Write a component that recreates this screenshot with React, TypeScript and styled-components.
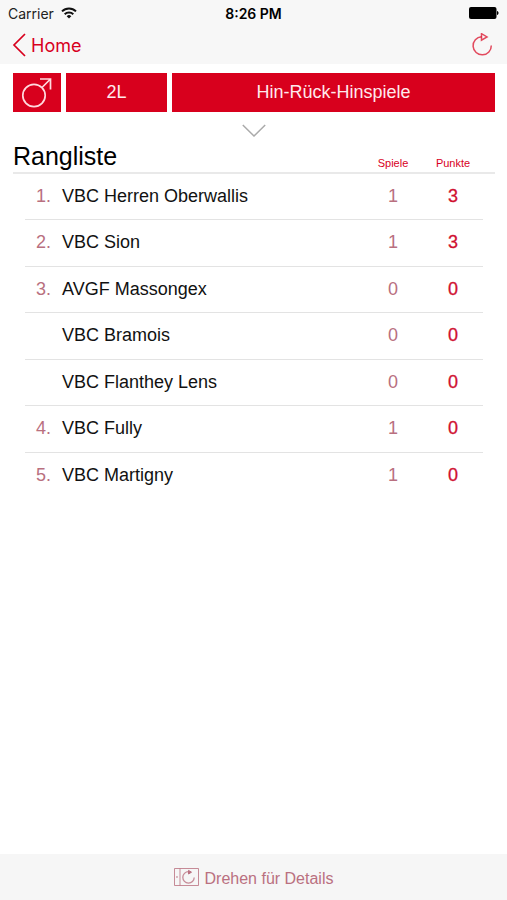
import React from "react";
import styled, { createGlobalStyle } from "styled-components";

const red = "#d8001d";
const muted = "#b9707f";
const bar = "#f7f7f7";
const line = "#e3e3e3";

const GlobalStyle = createGlobalStyle`
  *, *::before, *::after { box-sizing: border-box; }
  body {
    margin: 0;
    background: #fff;
    color: #111;
    font-family: "Liberation Sans", Arial, sans-serif;
  }
  button { font: inherit; border: 0; padding: 0; background: none; cursor: pointer; }
  svg { display: block; }
`;

const Screen = styled.div`
  min-height: 100vh;
  display: flex;
  flex-direction: column;
`;

const TopBar = styled.header`
  background: ${bar};
  font-family: Inter, sans-serif;
`;

const StatusBar = styled.div`
  height: 26px;
  padding: 0 8px;
  display: grid;
  grid-template-columns: 1fr auto 1fr;
  align-items: center;
  font-size: 14px;
  color: #222;
`;

const Carrier = styled.div`
  display: flex;
  align-items: center;
  gap: 7px;
`;

const Clock = styled.time`
  font-weight: 600;
  color: #000;
`;

const Battery = styled.div`
  justify-self: end;
`;

const NavBar = styled.nav`
  height: 38px;
  padding: 0 14px 0 12px;
  display: flex;
  align-items: center;
  justify-content: space-between;
`;

const BackLink = styled.a`
  display: flex;
  align-items: center;
  gap: 5px;
  color: ${red};
  font-size: 18px;
  text-decoration: none;
`;

const IconButton = styled.button`
  color: ${red};
`;

const Content = styled.main`
  flex: 1;
  padding: 9px 12px 0 13px;
`;

const Filters = styled.div`
  display: grid;
  grid-template-columns: 48px 101px 1fr;
  gap: 5px;
`;

const FilterButton = styled.button`
  height: 39px;
  display: flex;
  align-items: center;
  justify-content: center;
  background: ${red};
  color: #ffe9ec;
  font-size: 18px;
`;

const ExpandButton = styled.button`
  display: block;
  margin: 12px auto 0;
`;

const Table = styled.table`
  display: block;
  margin-top: 3px;
`;

const TableHead = styled.thead`
  display: block;
  border-bottom: 2px solid #e9e9e9;
`;

const HeadRow = styled.tr`
  height: 32px;
  padding-right: 12px;
  display: grid;
  grid-template-columns: 1fr 60px 60px;
  align-items: end;
`;

const Title = styled.th`
  padding: 0 0 1px;
  font-size: 25px;
  line-height: 30px;
  font-weight: 400;
  text-align: left;
  color: #000;
`;

const ColumnLabel = styled.th`
  padding: 0 0 2px;
  font-size: 11px;
  line-height: 14px;
  font-weight: 400;
  text-align: center;
  color: ${red};
`;

const TableBody = styled.tbody`
  display: block;
  margin: 0 12px;
`;

const TeamRow = styled.tr`
  height: 46px;
  display: grid;
  grid-template-columns: 26px 1fr 60px 60px;
  align-items: center;
  font-size: 18px;
  line-height: 22px;

  &:nth-child(even) { height: 47px; }
  &:not(:last-child) { border-bottom: 1px solid ${line}; }
`;

const Rank = styled.td`
  padding: 0 0 2px;
  text-align: right;
  color: ${muted};
`;

const Team = styled.td`
  padding: 0 0 2px 11px;
`;

const Score = styled.td<{ $strong?: boolean }>`
  padding: 0 0 2px;
  text-align: center;
  color: ${(p) => (p.$strong ? "#d01030" : muted)};
  -webkit-text-stroke: ${(p) => (p.$strong ? "0.3px currentColor" : "0")};
`;

const Footer = styled.footer`
  height: 46px;
  padding-top: 4px;
  display: flex;
  align-items: center;
  justify-content: center;
  gap: 6px;
  background: #f6f6f6;
  color: #ba7080;
  font-size: 16px;
`;

const teams = [
  { rank: "1.", name: "VBC Herren Oberwallis", games: 1, points: 3 },
  { rank: "2.", name: "VBC Sion", games: 1, points: 3 },
  { rank: "3.", name: "AVGF Massongex", games: 0, points: 0 },
  { rank: "", name: "VBC Bramois", games: 0, points: 0 },
  { rank: "", name: "VBC Flanthey Lens", games: 0, points: 0 },
  { rank: "4.", name: "VBC Fully", games: 1, points: 0 },
  { rank: "5.", name: "VBC Martigny", games: 1, points: 0 },
];

const WifiIcon = () => (
  <svg width="16" height="12" viewBox="0 0 16 12" fill="none" stroke="#111" strokeWidth="2" aria-hidden="true">
    <path d="M1 4.4a10 10 0 0 1 14 0" />
    <path d="M3.7 7.3a6.1 6.1 0 0 1 8.6 0" />
    <path d="M8 11.6 5.7 9.2a3.3 3.3 0 0 1 4.6 0z" fill="#111" stroke="none" />
  </svg>
);

const BatteryIcon = () => (
  <svg width="30" height="12" viewBox="0 0 30 12" aria-label="Battery full" role="img">
    <rect x="0" y="0" width="27.5" height="12" rx="2" fill="#000" />
    <path d="M28 4c2 .4 2 3.6 0 4z" fill="#000" />
  </svg>
);

const BackIcon = () => (
  <svg width="14" height="24" viewBox="0 0 14 24" fill="none" stroke="currentColor" strokeWidth="1.7" aria-hidden="true">
    <path d="M13 1 2 12l11 11" />
  </svg>
);

const ReloadIcon = () => (
  <svg width="22" height="24" viewBox="0 0 22 24" fill="none" stroke="currentColor" strokeWidth="1.5" strokeOpacity=".7" aria-hidden="true">
    <path d="M10.5 3.7A9.1 9.1 0 1 0 20.3 12.5" />
    <path d="M10.5 .7v6.400l5.500-3.200z" />
  </svg>
);

const MaleIcon = () => (
  <svg width="32" height="32" viewBox="0 0 32 32" fill="none" stroke="#ffd9de" strokeWidth="1.7" aria-hidden="true">
    <circle cx="13" cy="18.5" r="11.2" />
    <path d="M21 10.5 29.500 2M19 2h10.500v10.500" />
  </svg>
);

const ChevronIcon = () => (
  <svg width="24" height="13" viewBox="0 0 24 13" fill="none" stroke="#aaa" strokeWidth="1.5" aria-hidden="true">
    <path d="M.8 1 12 12 23.2 1" />
  </svg>
);

const RotateIcon = () => (
  <svg width="25" height="22" viewBox="0 0 25 22" fill="none" stroke="currentColor" aria-hidden="true">
    <path d="M.5.5h24v17H.5zM6 .5v17" strokeOpacity=".8" />
    <circle cx="3" cy="9" r=".6" strokeOpacity=".6" />
    <path d="M14.500 3.700A5.700 5.700 0 1 0 20.200 9.500" strokeWidth="1.300" strokeOpacity=".8" />
    <path d="M14.500 2.400v3.600l3-1.800z" fill="currentColor" />
  </svg>
);

export default function App() {
  return (
    <Screen>
      <GlobalStyle />
      <TopBar>
        <StatusBar>
          <Carrier>
            Carrier <WifiIcon />
          </Carrier>
          <Clock>8:26 PM</Clock>
          <Battery>
            <BatteryIcon />
          </Battery>
        </StatusBar>
        <NavBar>
          <BackLink href="#home">
            <BackIcon />
            Home
          </BackLink>
          <IconButton type="button" aria-label="Neu laden">
            <ReloadIcon />
          </IconButton>
        </NavBar>
      </TopBar>
      <Content>
        <Filters>
          <FilterButton type="button" aria-label="Herren">
            <MaleIcon />
          </FilterButton>
          <FilterButton type="button">2L</FilterButton>
          <FilterButton type="button">Hin-Rück-Hinspiele</FilterButton>
        </Filters>
        <ExpandButton type="button" aria-label="Aufklappen">
          <ChevronIcon />
        </ExpandButton>
        <Table>
          <TableHead>
            <HeadRow>
              <Title scope="col">Rangliste</Title>
              <ColumnLabel scope="col">Spiele</ColumnLabel>
              <ColumnLabel scope="col">Punkte</ColumnLabel>
            </HeadRow>
          </TableHead>
          <TableBody>
            {teams.map((team) => (
              <TeamRow key={team.name}>
                <Rank>{team.rank}</Rank>
                <Team>{team.name}</Team>
                <Score>{team.games}</Score>
                <Score $strong>{team.points}</Score>
              </TeamRow>
            ))}
          </TableBody>
        </Table>
      </Content>
      <Footer>
        <RotateIcon />
        Drehen für Details
      </Footer>
    </Screen>
  );
}
